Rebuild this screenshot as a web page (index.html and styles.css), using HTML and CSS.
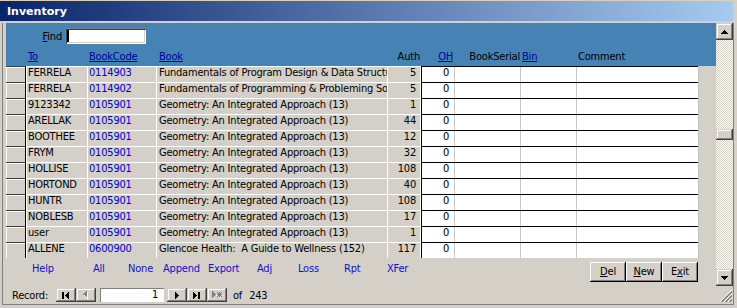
FILE: index.html
```html
<!DOCTYPE html>
<html>
<head>
<meta charset="utf-8">
<title>Inventory</title>
<link rel="stylesheet" href="styles.css">
</head>
<body>
<div class="win">
  <div class="titlebar"><span class="title">Inventory</span></div>
  <div class="frame">
    <div class="inner">
      <div class="main">
        <div class="form">
          <div class="fheader">
            <div class="findrow">
              <span class="findlbl"><u>F</u>ind</span>
              <span class="findbox"><span class="caret"></span></span>
            </div>
            <div class="cols hdr">
              <span></span>
              <span class="h lk pl2">To</span>
              <span class="h lk pl2">BookCode</span>
              <span class="h lk pl3">Book</span>
              <span class="h r pr1">Auth</span>
              <span class="h lk r pr1">OH</span>
              <span class="h r">BookSerial</span>
              <span class="h lk pl2">Bin</span>
              <span class="h pl2">Comment</span>
              <span></span>
            </div>
          </div>
          <div class="rows">
            <div class="cols row"><span class="sel"></span><span class="c g to">FERRELA</span><span class="c g code">0114903</span><span class="c g book">Fundamentals of Program Design &amp; Data Structures</span><span class="c g auth">5</span><span class="c w oh">0</span><span class="c w"></span><span class="c w"></span><span class="c w"></span><span class="rest"></span></div>
            <div class="cols row"><span class="sel"></span><span class="c g to">FERRELA</span><span class="c g code">0114902</span><span class="c g book">Fundamentals of Programming &amp; Probleming Solving</span><span class="c g auth">5</span><span class="c w oh">0</span><span class="c w"></span><span class="c w"></span><span class="c w"></span><span class="rest"></span></div>
            <div class="cols row"><span class="sel"></span><span class="c g to">9123342</span><span class="c g code">0105901</span><span class="c g book">Geometry: An Integrated Approach (13)</span><span class="c g auth">1</span><span class="c w oh">0</span><span class="c w"></span><span class="c w"></span><span class="c w"></span><span class="rest"></span></div>
            <div class="cols row"><span class="sel"></span><span class="c g to">ARELLAK</span><span class="c g code">0105901</span><span class="c g book">Geometry: An Integrated Approach (13)</span><span class="c g auth">44</span><span class="c w oh">0</span><span class="c w"></span><span class="c w"></span><span class="c w"></span><span class="rest"></span></div>
            <div class="cols row"><span class="sel"></span><span class="c g to">BOOTHEE</span><span class="c g code">0105901</span><span class="c g book">Geometry: An Integrated Approach (13)</span><span class="c g auth">12</span><span class="c w oh">0</span><span class="c w"></span><span class="c w"></span><span class="c w"></span><span class="rest"></span></div>
            <div class="cols row"><span class="sel"></span><span class="c g to">FRYM</span><span class="c g code">0105901</span><span class="c g book">Geometry: An Integrated Approach (13)</span><span class="c g auth">32</span><span class="c w oh">0</span><span class="c w"></span><span class="c w"></span><span class="c w"></span><span class="rest"></span></div>
            <div class="cols row"><span class="sel"></span><span class="c g to">HOLLISE</span><span class="c g code">0105901</span><span class="c g book">Geometry: An Integrated Approach (13)</span><span class="c g auth">108</span><span class="c w oh">0</span><span class="c w"></span><span class="c w"></span><span class="c w"></span><span class="rest"></span></div>
            <div class="cols row"><span class="sel"></span><span class="c g to">HORTOND</span><span class="c g code">0105901</span><span class="c g book">Geometry: An Integrated Approach (13)</span><span class="c g auth">40</span><span class="c w oh">0</span><span class="c w"></span><span class="c w"></span><span class="c w"></span><span class="rest"></span></div>
            <div class="cols row"><span class="sel"></span><span class="c g to">HUNTR</span><span class="c g code">0105901</span><span class="c g book">Geometry: An Integrated Approach (13)</span><span class="c g auth">108</span><span class="c w oh">0</span><span class="c w"></span><span class="c w"></span><span class="c w"></span><span class="rest"></span></div>
            <div class="cols row"><span class="sel"></span><span class="c g to">NOBLESB</span><span class="c g code">0105901</span><span class="c g book">Geometry: An Integrated Approach (13)</span><span class="c g auth">17</span><span class="c w oh">0</span><span class="c w"></span><span class="c w"></span><span class="c w"></span><span class="rest"></span></div>
            <div class="cols row"><span class="sel"></span><span class="c g to">user</span><span class="c g code">0105901</span><span class="c g book">Geometry: An Integrated Approach (13)</span><span class="c g auth">1</span><span class="c w oh">0</span><span class="c w"></span><span class="c w"></span><span class="c w"></span><span class="rest"></span></div>
            <div class="cols row"><span class="sel"></span><span class="c g to">ALLENE</span><span class="c g code">0600900</span><span class="c g book">Glencoe Health:&nbsp; A Guide to Wellness (152)</span><span class="c g auth">117</span><span class="c w oh">0</span><span class="c w"></span><span class="c w"></span><span class="c w"></span><span class="rest"></span></div>
          </div>
          <div class="ffooter">
            <div class="links">
              <span class="lnk w61">Help</span>
              <span class="lnk w35">All</span>
              <span class="lnk w35">None</span>
              <span class="lnk w45">Append</span>
              <span class="lnk w49">Export</span>
              <span class="lnk w41">Adj</span>
              <span class="lnk w46">Loss</span>
              <span class="lnk w43">Rpt</span>
              <span class="lnk">XFer</span>
            </div>
            <div class="btns">
              <span class="btn"><u>D</u>el</span>
              <span class="btn"><u>N</u>ew</span>
              <span class="btn">E<u>x</u>it</span>
            </div>
          </div>
        </div>
        <div class="vscroll">
          <span class="sbtn"><svg width="7" height="4" viewBox="0 0 7 4"><path d="M3 0h1v1h1v1h1v1h1v1H0V3h1V2h1V1h1z" fill="#000"/></svg></span>
          <span class="track-a"></span>
          <span class="thumb"></span>
          <span class="track-b"></span>
          <span class="sbtn"><svg width="7" height="4" viewBox="0 0 7 4"><path d="M0 0h7v1H6v1H5v1H4v1H3V3H2V2H1V1H0z" fill="#000"/></svg></span>
        </div>
      </div>
      <div class="navrow">
        <div class="nav">
          <span class="reclbl">Record:</span>
          <span class="nbtn nfirst"><svg width="8" height="7" viewBox="0 0 8 7"><path d="M0 0h2v7H0z M3 3h1v1H3z M4 2h1v3H4z M5 1h1v5H5z M6 0h1v7H6z" fill="#000"/></svg></span>
          <span class="nbtn"><svg width="6" height="8" viewBox="0 0 6 8"><path d="M0 3h1v1H0z M1 2h1v3H1z M2 1h1v5H2z M3 0h1v7H3z" fill="#808080"/><path d="M1 4h1v1H1z M2 5h1v1H2z M3 6h1v1H3z M4 1h1v7H4z" fill="#fff"/></svg></span>
          <span class="navbox">1</span>
          <span class="nbtn nnext"><svg width="4" height="7" viewBox="0 0 4 7"><path d="M0 0h1v7H0z M1 1h1v5H1z M2 2h1v3H2z M3 3h1v1H3z" fill="#000"/></svg></span>
          <span class="nbtn"><svg width="8" height="7" viewBox="0 0 8 7"><path d="M0 0h1v7H0z M1 1h1v5H1z M2 2h1v3H2z M3 3h1v1H3z M5 0h2v7H5z" fill="#000"/></svg></span>
          <span class="nbtn"><svg width="11" height="8" viewBox="0 0 11 8"><path d="M0 0h1v7H0z M1 1h1v5H1z M2 2h1v3H2z M3 3h1v1H3z M7 1h1v5H7z M5 3h5v1H5z M5 1h1v1H5z M9 1h1v1H9z M6 2h1v1H6z M8 2h1v1H8z M6 4h1v1H6z M8 4h1v1H8z M5 5h1v1H5z M9 5h1v1H9z" fill="#808080"/><path d="M1 7h1v1H1z M4 4h1v1H4z M8 6h1v1H8z M10 4h1v1H10z" fill="#fff"/></svg></span>
          <span class="oflbl">of</span>
          <span class="count">243</span>
        </div>
        <div class="grip"><svg width="17" height="17" viewBox="0 0 17 17"><path d="M16 4L4 16M16 8L8 16M16 12L12 16" stroke="#fff" stroke-width="1" shape-rendering="crispEdges" fill="none"/><path d="M16 5L5 16M16 6L6 16M16 9L9 16M16 10L10 16M16 13L13 16M16 14L14 16" stroke="#808080" stroke-width="1" shape-rendering="crispEdges" fill="none"/></svg></div>
      </div>
    </div>
  </div>
</div>
</body>
</html>
```

FILE: styles.css
```css
* { box-sizing: border-box; margin: 0; padding: 0; }
html, body { width: 737px; height: 308px; overflow: hidden; }
body {
  background: #d4d0c8;
  font-family: "DejaVu Sans Condensed", "DejaVu Sans", sans-serif;
  font-stretch: condensed;
  font-size: 11px;
  letter-spacing: -0.2px;
  color: #000;
}
.win { width: 737px; height: 308px; display: flex; flex-direction: column; background: #d4d0c8; }
.titlebar {
  height: 20px; flex: none; margin: 1px 4px 0 0;
  background: linear-gradient(90deg, #0a246a 0%, #a6caf0 100%);
  display: flex; align-items: center; padding-left: 7px;
}
.title { color: #fff; font-family: "DejaVu Sans", sans-serif; font-stretch: normal; font-weight: bold; font-size: 11px; letter-spacing: 0; padding-top: 1px; }
.frame { flex: 1; padding: 2px 3px 3px 2px; display: flex; }
.inner { flex: 1; border: 1px solid #808080; border-top: none; padding: 0 0 1px 3px; display: flex; flex-direction: column; }
.main { display: flex; height: 263px; flex: none; }
.form { width: 710px; display: flex; flex-direction: column; }

/* header */
.fheader { height: 43px; flex: none; background: #4682b4; }
.findrow { display: flex; align-items: flex-start; margin-top: 5px; height: 16px; }
.findlbl { width: 56px; text-align: right; line-height: 12px; margin-top: 3px; }
.findbox {
  margin-left: 3px; width: 81px; height: 16px; background: #fff;
  box-shadow: inset 1px 1px #808080, inset 2px 2px #404040, inset -1px -1px #fff, inset -2px -2px #d4d0c8;
  padding: 2px 0 0 2px;
}
.caret { display: block; width: 2px; height: 12px; background: #000; }
.cols { display: grid; grid-template-columns: 20px 61px 69px 231px 34px 33px 66px 56px 122px 18px; }
.hdr { margin-top: 7px; height: 14px; line-height: 12px; }
.h { white-space: nowrap; }
.lk { color: #0000a8; text-decoration: underline; }
.r { text-align: right; }
.pl2 { padding-left: 2px; }
.pl3 { padding-left: 3px; }
.pr1 { padding-right: 1px; }

/* rows */
.rows { height: 192px; flex: none; }
.row { height: 16px; }
.sel { background: #d4d0c8; box-shadow: inset -1px 0 #000, inset 0 1px #404040, inset 1px 2px #fff; }
.c { height: 16px; line-height: 12px; padding-top: 1px; white-space: nowrap; overflow: hidden; }
.g { background: #d4d0c8; box-shadow: inset 1px 1px #fff; }
.to { padding-left: 2px; }
.code { padding-left: 2px; color: #0000cc; }
.book { padding-left: 3px; }
.auth { text-align: right; padding-right: 5px; box-shadow: inset 1px 1px #fff, inset -1px 0 #fff; }
.w { background: #fff; box-shadow: inset 0 1px #000, inset 1px 0 #c8c8c8; }
.oh { text-align: right; padding-right: 5px; box-shadow: inset 1px 1px #000; }
.rest { background: #d4d0c8; box-shadow: inset 1px 0 #c0c0c0; }

/* footer */
.ffooter { height: 28px; flex: none; display: flex; align-items: flex-start; }
.links { display: flex; margin-top: 5px; padding-left: 26px; line-height: 12px; color: #1010c8; }
.lnk { white-space: nowrap; }
.w61 { width: 61px; } .w35 { width: 35px; } .w45 { width: 45px; } .w49 { width: 49px; }
.w41 { width: 41px; } .w46 { width: 46px; } .w43 { width: 43px; }
.btns { display: flex; margin-left: auto; margin-right: 18px; margin-top: 4px; }
.btn {
  width: 36px; height: 20px; display: flex; align-items: center; justify-content: center;
  background: #d4d0c8;
  box-shadow: inset -1px -1px #000, inset 1px 1px #fff, inset -2px -2px #808080;
  line-height: 12px;
}

/* scrollbar */
.vscroll {
  width: 17px; display: flex; flex-direction: column;
  background: repeating-conic-gradient(#d4d0c8 0 25%, #ffffff 0 50%) 0 0 / 2px 2px;
}
.sbtn, .thumb, .nbtn {
  background: #d4d0c8;
  box-shadow: inset -1px -1px #404040, inset 1px 1px #d4d0c8, inset -2px -2px #808080, inset 2px 2px #fff;
}
.sbtn { height: 17px; flex: none; display: flex; align-items: center; justify-content: center; }
.sbtn svg { display: block; }
.track-a { height: 89px; flex: none; }
.thumb { height: 11px; flex: none; }
.track-b { flex: 1; }

/* nav row */
.navrow { height: 17px; display: flex; flex: none; }
.nav { width: 710px; display: flex; align-items: flex-start; }
.reclbl { margin-left: 6px; margin-top: 4px; line-height: 12px; width: 44px; }
.nbtn { width: 20px; height: 14px; margin-top: 2px; display: flex; align-items: center; justify-content: center; }
.nbtn svg { display: block; }
.nfirst { margin-left: 0; }
.navbox {
  margin-left: 4px; width: 64px; height: 14px; margin-top: 2px; background: #fff;
  box-shadow: inset 1px 1px #808080, inset -1px -1px #fff;
  text-align: right; padding-right: 6px; line-height: 12px; padding-top: 1px;
}
.nnext { margin-left: 3px; }
.oflbl { margin-left: 6px; margin-top: 4px; line-height: 12px; }
.count { margin-left: 7px; margin-top: 4px; line-height: 12px; }
.grip { width: 17px; height: 17px; }
.grip svg { display: block; }
```
